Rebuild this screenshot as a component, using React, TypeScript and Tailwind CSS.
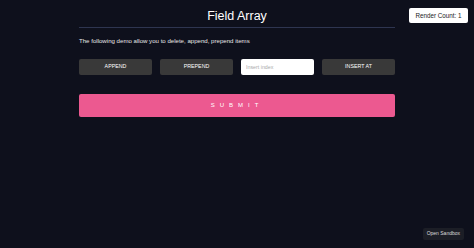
export default function App() {
  const font = { fontFamily: '"Liberation Sans", Arial, sans-serif' };
  return (
    <div className="relative h-[248px] w-[474px] overflow-hidden bg-[#0e101c] text-white" style={font}>
      <div className="absolute right-[6px] top-[8px] flex h-[15px] w-[59px] items-center justify-center rounded-[2px] bg-white text-[6.3px] text-[#222]">
        Render Count: 1
      </div>
      <div className="mx-auto w-[316px] pt-[8px]">
        <h1 className="text-center text-[12.5px] font-normal leading-[16px]">Field Array</h1>
        <div className="mt-[3px] h-px bg-[#2e3550]" />
        <p className="mt-[8px] text-[6.1px] leading-[9px] text-[#e6e6e6]">
          The following demo allow you to delete, append, prepend items
        </p>
        <div className="mt-[14px] grid grid-cols-4 gap-[8px]">
          <button className="h-[16px] rounded-[2px] bg-[#393939] text-[5.3px] text-white">APPEND</button>
          <button className="h-[16px] rounded-[2px] bg-[#393939] text-[5.3px] text-white">PREPEND</button>
          <input
            placeholder="Insert index"
            className="h-[16px] rounded-[2px] bg-white px-[5px] text-[5.3px] text-black placeholder:text-[#aaa] outline-none"
          />
          <button className="h-[16px] rounded-[2px] bg-[#393939] text-[5.3px] text-white">INSERT AT</button>
        </div>
        <button className="mt-[19px] h-[23px] w-full rounded-[2px] bg-[#ec5990] text-[6px] tracking-[5px] text-white">
          SUBMIT
        </button>
      </div>
      <div className="absolute bottom-[8px] right-[10px] flex h-[12px] items-center rounded-[2px] bg-[#1c1e26] px-[4px] text-[5px] text-[#ddd]">
        Open Sandbox
      </div>
    </div>
  );
}
